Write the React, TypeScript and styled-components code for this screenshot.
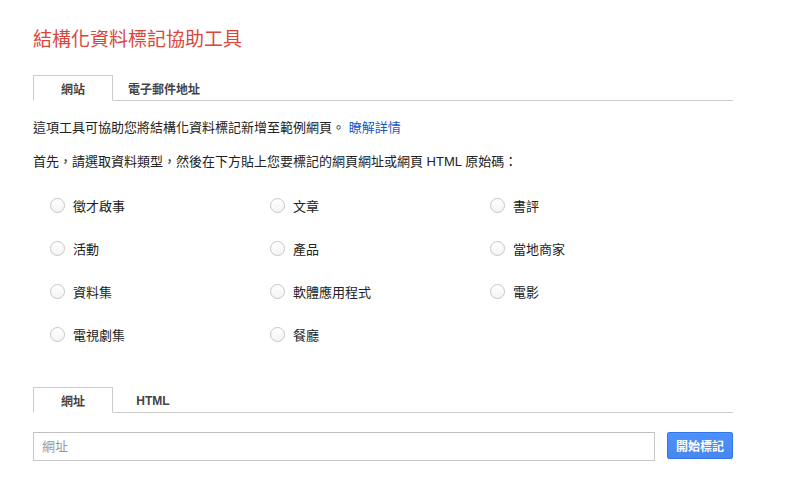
import React, { useState } from "react";
import styled, { createGlobalStyle } from "styled-components";

const GlobalStyle = createGlobalStyle`
  body {
    margin: 0;
    background: #ffffff;
    font-family: "Liberation Sans", "Noto Sans CJK TC", sans-serif;
    color: #222;
  }
`;

const types = [
  "徵才啟事",
  "文章",
  "書評",
  "活動",
  "產品",
  "當地商家",
  "資料集",
  "軟體應用程式",
  "電影",
  "電視劇集",
  "餐廳",
];

const App = () => {
  const [site, setSite] = useState<string>("web");
  const [source, setSource] = useState<string>("url");
  const [picked, setPicked] = useState<string>("");

  return (
    <Page>
      <GlobalStyle />
      <Title>結構化資料標記協助工具</Title>

      <TabBar>
        <Tab active={site === "web"} onClick={() => setSite("web")}>
          網站
        </Tab>
        <Tab active={site === "mail"} onClick={() => setSite("mail")}>
          電子郵件地址
        </Tab>
      </TabBar>

      <Intro>
        這項工具可協助您將結構化資料標記新增至範例網頁。 <Link href="#">瞭解詳情</Link>
      </Intro>
      <Prompt>首先，請選取資料類型，然後在下方貼上您要標記的網頁網址或網頁 HTML 原始碼：</Prompt>

      <TypeGrid>
        {types.map((t) => (
          <Choice key={t} onClick={() => setPicked(t)}>
            <Radio checked={picked === t} />
            <span>{t}</span>
          </Choice>
        ))}
      </TypeGrid>

      <TabBar gap={31}>
        <Tab active={source === "url"} onClick={() => setSource("url")}>
          網址
        </Tab>
        <Tab active={source === "html"} onClick={() => setSource("html")}>
          HTML
        </Tab>
      </TabBar>

      <InputRow>
        <UrlInput placeholder="網址" />
        <StartButton>開始標記</StartButton>
      </InputRow>
    </Page>
  );
};

export default App;

const Page = styled.div`
  width: 700px;
  padding: 25px 0 0 33px;
`;

const Title = styled.h1`
  margin: 0;
  font-size: 19px;
  line-height: 30px;
  font-weight: normal;
  color: #d9473a;
`;

const TabBar = styled.div<{ gap?: number }>`
  display: flex;
  align-items: flex-start;
  height: 25px;
  margin-top: ${({ gap }) => gap ?? 20}px;
  border-bottom: 1px solid #cccccc;
`;

const Tab = styled.div<{ active?: boolean }>`
  box-sizing: border-box;
  height: 26px;
  min-width: 80px;
  padding: 0 14px;
  display: flex;
  align-items: center;
  justify-content: center;
  font-size: 12px;
  font-weight: bold;
  color: #444;
  cursor: pointer;
  border: 1px solid ${({ active }) => (active ? "#cccccc" : "transparent")};
  border-bottom: ${({ active }) => (active ? "1px solid #ffffff" : "none")};
  background: ${({ active }) => (active ? "#ffffff" : "transparent")};
  position: relative;
`;

const Intro = styled.p`
  margin: 18px 0 0;
  font-size: 13px;
  line-height: 18px;
`;

const Link = styled.a`
  color: #1a57c6;
  text-decoration: none;
`;

const Prompt = styled.p`
  margin: 16px 0 0;
  font-size: 13px;
  line-height: 18px;
`;

const TypeGrid = styled.div`
  display: grid;
  grid-template-columns: 220px 220px 220px;
  grid-auto-rows: 43px;
  margin-top: 13px;
  padding-left: 17px;
`;

const Choice = styled.label`
  display: flex;
  align-items: center;
  gap: 8px;
  font-size: 13px;
  cursor: pointer;
`;

const Radio = styled.span<{ checked?: boolean }>`
  box-sizing: border-box;
  width: 15px;
  height: 15px;
  border-radius: 50%;
  border: 1px solid #c6c6c6;
  background: ${({ checked }) =>
    checked
      ? "radial-gradient(circle, #555 0 3px, #fff 4px)"
      : "linear-gradient(#ffffff, #f4f4f4)"};
`;

const InputRow = styled.div`
  display: flex;
  align-items: flex-start;
  gap: 12px;
  margin-top: 19px;
`;

const UrlInput = styled.input`
  box-sizing: border-box;
  width: 622px;
  height: 29px;
  padding: 0 8px;
  border: 1px solid #c8c8c8;
  border-top-color: #c0c0c0;
  font-family: "Liberation Sans", "Noto Sans CJK TC", sans-serif;
  font-size: 13px;
  outline: none;

  &::placeholder {
    color: #999;
  }
`;

const StartButton = styled.button`
  width: 66px;
  height: 27px;
  border: 1px solid #3079ed;
  border-radius: 2px;
  background: linear-gradient(#4d90fe, #4787ed);
  color: #ffffff;
  font-family: "Liberation Sans", "Noto Sans CJK TC", sans-serif;
  font-size: 12px;
  font-weight: bold;
  padding: 0;
  cursor: pointer;
`;
